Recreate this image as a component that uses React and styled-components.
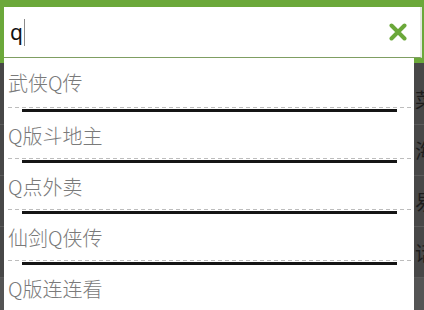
import React from "react";
import styled, { createGlobalStyle } from "styled-components";

const GREEN = "#6ba83a";

const GlobalStyle = createGlobalStyle`
  html, body {
    margin: 0;
    padding: 0;
    background: #474747;
  }
  body {
    font-family: "Noto Sans CJK SC", "Noto Sans", sans-serif;
  }
`;

const suggestions = ["武侠Q传", "Q版斗地主", "Q点外卖", "仙剑Q侠传", "Q版连连看"];
const behind = ["菜谱大全", "海豚浏览器", "易信", "话费充值"];

const App = () => {
  return (
    <Screen>
      <GlobalStyle />
      <Header>
        <SearchBox>
          <Query>
            q<Caret />
          </Query>
          <ClearButton aria-label="clear">
            <svg width="18" height="18" viewBox="0 0 18 18">
              <path
                d="M2.5 2.5 L15.5 15.5 M15.5 2.5 L2.5 15.5"
                stroke={GREEN}
                strokeWidth="4"
                strokeLinecap="round"
              />
            </svg>
          </ClearButton>
        </SearchBox>
      </Header>

      <BehindList>
        {behind.map((name) => (
          <BehindRow key={name}>{name}</BehindRow>
        ))}
        <BehindFooter />
      </BehindList>

      <Dropdown>
        {suggestions.map((text, i) => (
          <React.Fragment key={text}>
            {i > 0 && (
              <Separator>
                <Bar />
              </Separator>
            )}
            <Item $first={i === 0}>{text}</Item>
          </React.Fragment>
        ))}
      </Dropdown>
    </Screen>
  );
};

const Screen = styled.div`
  position: relative;
  width: 424px;
  height: 310px;
  overflow: hidden;
  background: #474747;
`;

const Header = styled.div`
  background: ${GREEN};
  padding: 7px 2px 5px 4px;
`;

const SearchBox = styled.div`
  display: flex;
  align-items: center;
  justify-content: space-between;
  height: 50px;
  background: #fff;
  border-bottom: 1px solid #7f9e62;
  border-right: 2px solid #e4e8e0;
  padding: 0 13px 0 6px;
`;

const Query = styled.div`
  display: flex;
  align-items: center;
  font-family: "Noto Sans", "Open Sans", sans-serif;
  font-size: 21px;
  color: #111;
  line-height: 1;
`;

const Caret = styled.span`
  display: inline-block;
  width: 1px;
  height: 27px;
  margin-left: 1px;
  background: #8a8a8a;
`;

const ClearButton = styled.div`
  display: flex;
  align-items: center;
  justify-content: center;
  width: 18px;
  height: 18px;
`;

const BehindList = styled.div`
  padding-top: 11px;
`;

/* rows of the page under the dropdown; only their first glyph peeks out */
const BehindRow = styled.div`
  height: 50px;
  border-bottom: 1px solid #5a5a5a;
  padding-left: 415px;
  display: flex;
  align-items: center;
  white-space: nowrap;
  font-size: 20px;
  color: #1c1c1c;
`;

const BehindFooter = styled.div`
  height: 40px;
  background: #545454;
`;

const Dropdown = styled.div`
  position: absolute;
  top: 58px;
  left: 4px;
  width: 410px;
  bottom: 0;
  background: #fff;
`;

const Item = styled.div`
  height: ${(p) => (p.$first ? "49px" : "46px")};
  display: flex;
  align-items: center;
  padding-left: 4px;
  font-size: 20px;
  font-weight: 300;
  color: #7a7a7a;
  white-space: nowrap;
`;

const Separator = styled.div`
  height: 5px;
  margin: 0 2px 0 4px;
  background: repeating-linear-gradient(
      to right,
      #bdbdbd 0 4px,
      transparent 4px 7px
    )
    top / 100% 1px no-repeat;
  padding-top: 2px;
  box-sizing: border-box;
`;

const Bar = styled.div`
  height: 3px;
  margin: 0 15px 0 14px;
  background: #151515;
`;

export default App;
